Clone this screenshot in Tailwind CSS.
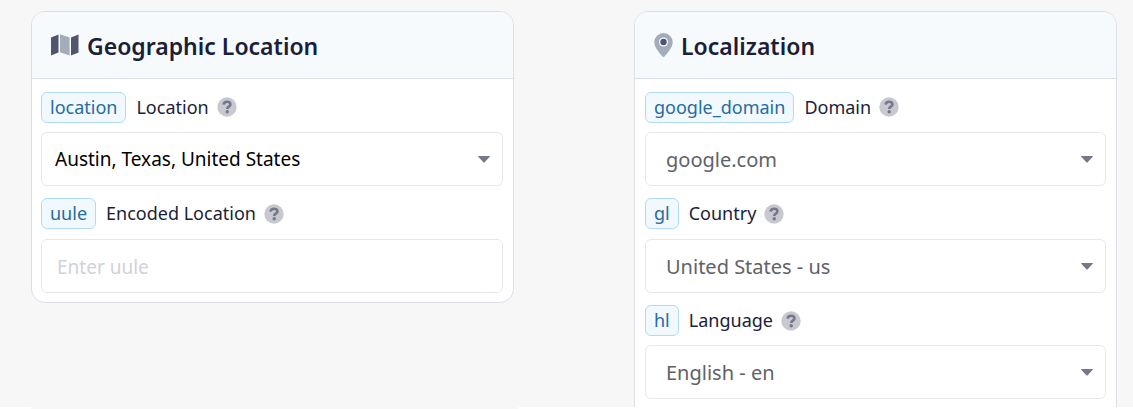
<!DOCTYPE html>
<html lang="en">
<head>
<meta charset="utf-8">
<meta name="viewport" content="width=device-width, initial-scale=1">
<title>Search parameters</title>
<script src="https://cdn.jsdelivr.net/npm/@tailwindcss/browser@4"></script>
</head>
<body class="flex h-screen flex-col overflow-hidden bg-white font-['Segoe_UI','Noto_Sans',sans-serif] text-[#1c1e37]">
<svg class="hidden" aria-hidden="true">
  <symbol id="help" viewBox="0 0 20 20">
    <circle cx="10" cy="10" r="9.7" fill="#c8c9d0"/>
    <path d="M6.600 7.700C6.800 5.600 8.200 4.800 10.100 4.800c2 0 3.300 1 3.300 2.600 0 2.300-3.200 2.200-3.200 4.500" fill="none" stroke="#74788a" stroke-width="2.600"/>
    <circle cx="10.200" cy="14.700" r="1.700" fill="#74788a"/>
  </symbol>
  <symbol id="caret" viewBox="0 0 12 7"><path d="M0.500 0h11q.6.3.2.8L6.700 6.200q-.7.600-1.400 0L.3.800Q-.1.300.5 0Z" fill="#747888"/></symbol>
</svg>
<main class="grid min-h-0 flex-1 grid-cols-2 items-start gap-[120px] overflow-hidden bg-[#f7f7f7] pt-[11px] pr-4 pl-[31px]">
  <section class="overflow-hidden rounded-[14px] border border-[#dcdfe7] bg-white">
    <header class="flex h-[67px] items-center gap-2 border-b border-[#dcdfe7] bg-[#f6fafd] px-[19px]">
      <svg class="h-[22px] w-7" viewBox="0 0 28 22" aria-hidden="true">
        <path d="M0 3.500 7.500.5v18L0 21.500Z M20 3.500 27.500.5v18L20 21.500Z" fill="#50546d"/>
        <path d="M9 .2 18.600 3.500v18L9 18.300Z" fill="#a3adba"/>
      </svg>
      <h2 class="pt-[2px] text-[23px] leading-8 font-semibold">Geographic Location</h2>
    </header>
    <div class="flex flex-col gap-3 pt-3 pr-[10px] pb-[9px] pl-[9px]">
      <div class="flex flex-col gap-[9px]">
        <div class="flex h-8 items-center">
          <code class="flex h-[31px] items-center rounded-md border border-[#afdafa] bg-[#f1f9ff] px-2 font-['Segoe_UI','Noto_Sans',sans-serif] text-[18px] text-[#256c9f]">location</code>
          <label for="location" class="ml-[10px] text-[18px]">Location</label>
          <button type="button" aria-label="Help for location" class="ml-2"><svg class="size-5"><use href="#help"/></svg></button>
        </div>
        <div class="relative">
          <select id="location" class="h-[54px] w-full appearance-none rounded-md border border-[#e7e8ec] bg-white pr-10 pl-[13px] text-[19px] text-black"><option>Austin, Texas, United States</option></select>
          <svg class="pointer-events-none absolute top-6 right-[13px] h-[7px] w-3"><use href="#caret"/></svg>
        </div>
      </div>
      <div class="flex flex-col gap-[10px]">
        <div class="flex h-[31px] items-center">
          <code class="flex h-[31px] items-center rounded-md border border-[#afdafa] bg-[#f1f9ff] px-2 font-['Segoe_UI','Noto_Sans',sans-serif] text-[18px] text-[#256c9f]">uule</code>
          <label for="uule" class="ml-[10px] text-[18px]">Encoded Location</label>
          <button type="button" aria-label="Help for uule" class="ml-2"><svg class="size-5"><use href="#help"/></svg></button>
        </div>
        <input id="uule" type="text" placeholder="Enter uule" class="h-[54px] w-full rounded-md border border-[#e7e8ec] bg-white px-[15px] pt-[2px] text-[19px] placeholder:text-[#d0d2da]">
      </div>
    </div>
  </section>

  <section class="overflow-hidden rounded-[14px] border border-[#dcdfe7] bg-white">
    <header class="flex h-[67px] items-center gap-2 border-b border-[#dcdfe7] bg-[#f6fafd] px-[19px]">
      <svg class="h-6 w-[19px]" viewBox="0 0 19 24" aria-hidden="true">
        <path d="M9.500 0A9.200 9.200 0 0 0 .3 9.200C.3 13.500 3.500 17.500 8.500 23.500q1 .9 2 0C15.500 17.500 18.700 13.500 18.700 9.200A9.200 9.200 0 0 0 9.500 0Z" fill="#a3adba"/>
        <circle cx="9.500" cy="9" r="4.600" fill="#f5f9fd"/>
        <circle cx="9.500" cy="9" r="3.200" fill="#50546d"/>
      </svg>
      <h2 class="pt-[2px] text-[23px] leading-8 font-semibold">Localization</h2>
    </header>
    <div class="flex flex-col gap-3 px-[10px] pt-3 pb-[9px]">
      <div class="flex flex-col gap-[9px]">
        <div class="flex h-8 items-center">
          <code class="flex h-[31px] items-center rounded-md border border-[#afdafa] bg-[#f1f9ff] px-2 font-['Segoe_UI','Noto_Sans',sans-serif] text-[18px] text-[#256c9f]">google_domain</code>
          <label for="domain" class="ml-[10px] text-[18px]">Domain</label>
          <button type="button" aria-label="Help for domain" class="ml-2"><svg class="size-5"><use href="#help"/></svg></button>
        </div>
        <div class="relative">
          <select id="domain" class="h-[54px] w-full appearance-none rounded-md border border-[#e7e8ec] bg-white pt-[2px] pr-10 pl-5 text-[20px] text-[#606267]"><option>google.com</option></select>
          <svg class="pointer-events-none absolute top-6 right-[13px] h-[7px] w-3"><use href="#caret"/></svg>
        </div>
      </div>
      <div class="flex flex-col gap-[10px]">
        <div class="flex h-[31px] items-center">
          <code class="flex h-[31px] items-center rounded-md border border-[#afdafa] bg-[#f1f9ff] px-2 font-['Segoe_UI','Noto_Sans',sans-serif] text-[18px] text-[#256c9f]">gl</code>
          <label for="country" class="ml-[10px] text-[18px]">Country</label>
          <button type="button" aria-label="Help for country" class="ml-2"><svg class="size-5"><use href="#help"/></svg></button>
        </div>
        <div class="relative">
          <select id="country" class="h-[54px] w-full appearance-none rounded-md border border-[#e7e8ec] bg-white pt-[2px] pr-10 pl-5 text-[20px] text-[#606267]"><option>United States - us</option></select>
          <svg class="pointer-events-none absolute top-6 right-[13px] h-[7px] w-3"><use href="#caret"/></svg>
        </div>
      </div>
      <div class="flex flex-col gap-[9px]">
        <div class="flex h-[31px] items-center">
          <code class="flex h-[31px] items-center rounded-md border border-[#afdafa] bg-[#f1f9ff] px-2 font-['Segoe_UI','Noto_Sans',sans-serif] text-[18px] text-[#256c9f]">hl</code>
          <label for="language" class="ml-[10px] text-[18px]">Language</label>
          <button type="button" aria-label="Help for language" class="ml-2"><svg class="size-5"><use href="#help"/></svg></button>
        </div>
        <div class="relative">
          <select id="language" class="h-[54px] w-full appearance-none rounded-md border border-[#e7e8ec] bg-white pt-[2px] pr-10 pl-5 text-[20px] text-[#606267]"><option>English - en</option></select>
          <svg class="pointer-events-none absolute top-6 right-[13px] h-[7px] w-3"><use href="#caret"/></svg>
        </div>
      </div>
      <div class="h-8"></div>
    </div>
  </section>
</main>
<div class="grid h-[2px] shrink-0 grid-cols-2 gap-28 pr-4 pl-[31px]"><div class="bg-[#f7f7f7]"></div></div>
</body>
</html>
